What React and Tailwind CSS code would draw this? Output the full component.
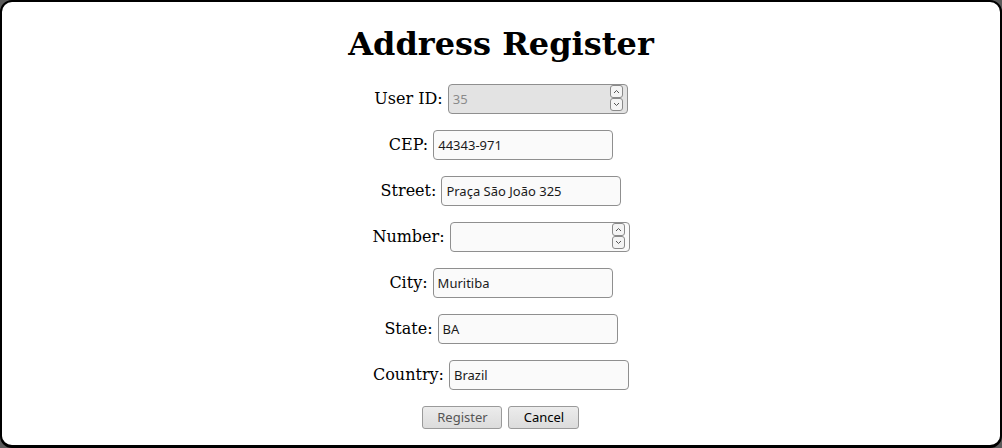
import { useState } from "react";

const fields = [
  { key: "userId", label: "User ID:", type: "number", value: "35", disabled: true },
  { key: "cep", label: "CEP:", type: "text", value: "44343-971" },
  { key: "street", label: "Street:", type: "text", value: "Praça São João 325" },
  { key: "number", label: "Number:", type: "number", value: "" },
  { key: "city", label: "City:", type: "text", value: "Muritiba" },
  { key: "state", label: "State:", type: "text", value: "BA" },
  { key: "country", label: "Country:", type: "text", value: "Brazil" },
];

function Spinner() {
  return (
    <div className="absolute right-[5px] top-[1px] flex flex-col">
      <span className="flex h-[13px] w-[13px] items-center justify-center rounded-[3px] border border-[#8a8a8a] bg-[#f4f4f4]">
        <svg width="7" height="5" viewBox="0 0 7 5" fill="none" stroke="#555" strokeWidth="1">
          <path d="M1 4 L3.5 1.5 L6 4" />
        </svg>
      </span>
      <span className="flex h-[13px] w-[13px] items-center justify-center rounded-[3px] border border-[#8a8a8a] bg-[#f4f4f4]">
        <svg width="7" height="5" viewBox="0 0 7 5" fill="none" stroke="#555" strokeWidth="1">
          <path d="M1 1 L3.5 3.5 L6 1" />
        </svg>
      </span>
    </div>
  );
}

function Field({ field, value, onChange }) {
  return (
    <div className="flex items-center justify-center gap-[5px]">
      <label className="text-[16px] text-black [font-family:'DejaVu_Serif',serif]">{field.label}</label>
      <div className="relative">
        <input
          type="text"
          value={value}
          disabled={field.disabled}
          onChange={(event) => onChange(field.key, event.target.value)}
          className={`h-[30px] w-[180px] rounded-[4px] border border-[#8f8f8f] pb-[1px] pl-[4px] text-[13px] outline-none [font-family:'Noto_Sans',sans-serif] ${
            field.disabled ? "bg-[#e3e3e3] text-[#8a8a8a]" : "bg-[#fafafa] text-[#1a1a1a]"
          }`}
        />
        {field.type === "number" ? <Spinner /> : null}
      </div>
    </div>
  );
}

export default function App() {
  const [form, setForm] = useState(
    fields.reduce((acc, field) => {
      acc[field.key] = field.value;
      return acc;
    }, {})
  );

  function onChange(key, value) {
    setForm((prev) => ({ ...prev, [key]: value }));
  }

  return (
    <div className="h-[448px] w-[1002px] bg-[#5a5a5a]">
      <div className="flex h-full flex-col items-center rounded-[12px] border-2 border-b-[3px] border-black bg-white">
        <h1 className="mt-[22px] text-[32px] font-bold leading-[40px] text-black [font-family:'DejaVu_Serif',serif]">
          Address Register
        </h1>
        <form className="mt-[20px] flex flex-col gap-[16px]" onSubmit={(event) => event.preventDefault()}>
          {fields.map((field) => (
            <Field key={field.key} field={field} value={form[field.key]} onChange={onChange} />
          ))}
          <div className="flex justify-center gap-[6px]">
            <button
              type="submit"
              disabled
              className="h-[23px] w-[80px] rounded-[3px] border border-[#9a9a9a] bg-gradient-to-b from-[#ececec] to-[#dcdcdc] text-[13px] text-[#555] [font-family:'Noto_Sans',sans-serif]"
            >
              Register
            </button>
            <button
              type="button"
              className="h-[23px] w-[71px] rounded-[3px] border border-[#9a9a9a] bg-gradient-to-b from-[#ececec] to-[#dcdcdc] text-[13px] text-black [font-family:'Noto_Sans',sans-serif]"
            >
              Cancel
            </button>
          </div>
        </form>
      </div>
    </div>
  );
}
